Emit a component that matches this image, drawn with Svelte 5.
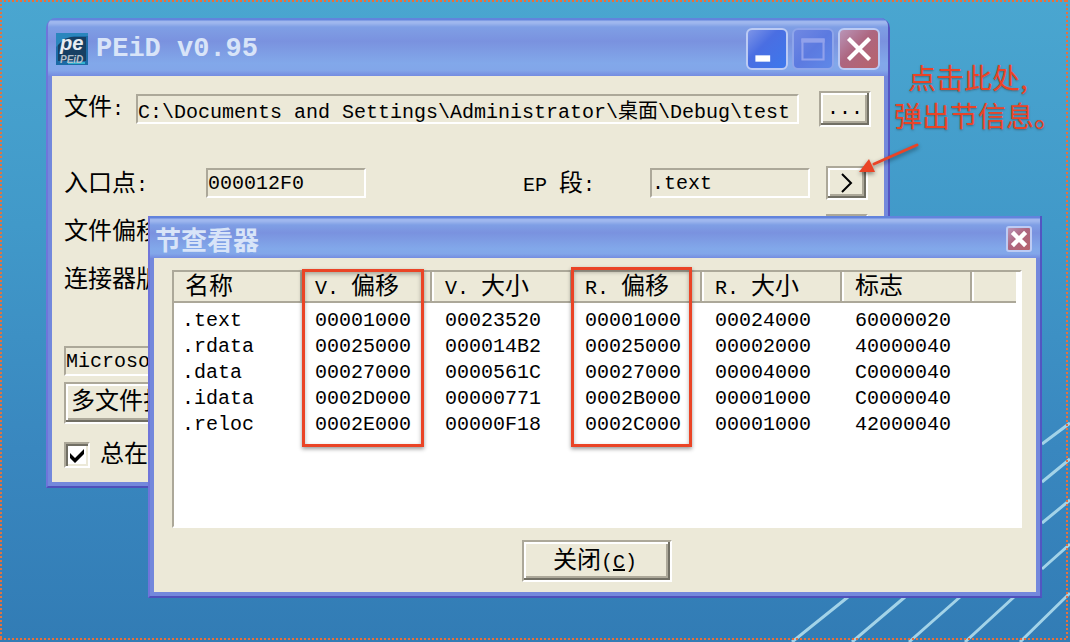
<script>
	//? variables
	const columns = [
		{ title: "名称", width: 128 },
		{ title: "V. 偏移", width: 130 },
		{ title: "V. 大小", width: 140 },
		{ title: "R. 偏移", width: 130 },
		{ title: "R. 大小", width: 140 },
		{ title: "标志", width: 130 },
	];

	const sections = [
		[".text", "00001000", "00023520", "00001000", "00024000", "60000020"],
		[".rdata", "00025000", "000014B2", "00025000", "00002000", "40000040"],
		[".data", "00027000", "0000561C", "00027000", "00004000", "C0000040"],
		[".idata", "0002D000", "00000771", "0002B000", "00001000", "C0000040"],
		[".reloc", "0002E000", "00000F18", "0002C000", "00001000", "42000040"],
	];

	let path = $state("C:\\Documents and Settings\\Administrator\\桌面\\Debug\\test");
	let entryPoint = $state("000012F0");
	let epSection = $state(".text");
	let compiler = $state("Microsoft");
	let onTop = $state(true);
	let showSections = $state(true);

	//? Logic

	// latin and chinese runs are set in different sizes, two latin cells to one hanzi
	function runs(text) {
		return text.match(/[\u4e00-\u9fff]+|[^\u4e00-\u9fff]+/g).map((part) => ({
			part,
			han: /[\u4e00-\u9fff]/.test(part),
		}));
	}
</script>

{#snippet mixed(text)}{#each runs(text) as run}<span class:han={run.han}>{run.part}</span>{/each}{/snippet}

<main class="desktop">
	<svg class="stripes" viewBox="0 0 280 222" aria-hidden="true">
		<path
			d="M2 222 58 177M62 222 115 177M119 222 170 177M175 222 224 177M230 222 280 173M252 149 280 124M252 103 280 80M252 62 280 39M252 24 280 3" />
	</svg>

	<section class="window app-window">
		<header class="titlebar">
			<svg class="logo" viewBox="0 0 32 32" aria-hidden="true">
				<rect width="32" height="32" fill="#1b6aa5" />
				<rect x="2" y="4" width="28" height="24" fill="#173f63" />
				<path d="M0 0h32v3H18L8 6 0 14z" fill="#2a86bd" />
				<path d="M12 29h17v2H12z" fill="#35b3cf" />
				<text x="4" y="17" font-size="20">pe</text>
				<text class="small" x="4" y="30" font-size="10">PEiD</text>
			</svg>
			<h1>PEiD v0.95</h1>
			<div class="caption-buttons">
				<button class="caption min" aria-label="最小化">
					<svg viewBox="0 0 36 36"><path d="M7 24h14v6H7z" fill="#fff" /></svg>
				</button>
				<button class="caption max" aria-label="最大化" disabled>
					<svg viewBox="0 0 36 36">
						<path d="M8 9h20v19H8z" fill="none" stroke="#91a1eb" stroke-width="2" />
						<path d="M7 8h22v4H7z" fill="#91a1eb" />
					</svg>
				</button>
				<button class="caption close" aria-label="关闭">
					<svg viewBox="0 0 36 36"><path d="M8 8 28 28M28 8 8 28" stroke="#fff" stroke-width="4" /></svg>
				</button>
			</div>
		</header>

		<div class="app-body">
			<div class="row file-row">
				<label for="path">{@render mixed("文件:")}</label>
				<input id="path" class="field grow" bind:value={path} />
				<button class="push browse">...</button>
			</div>
			<div class="row">
				<label class="wide" for="entry">{@render mixed("入口点:")}</label>
				<input id="entry" class="field" bind:value={entryPoint} />
				<label class="ep" for="ep">{@render mixed("EP 段:")}</label>
				<input id="ep" class="field" bind:value={epSection} />
				<button class="push arrow" aria-label="节查看器" onclick={() => (showSections = true)}>
					<svg viewBox="0 0 12 20" aria-hidden="true"><path d="M1 1 10 10 1 19" /></svg>
				</button>
			</div>
			<div class="row">
				<span>{@render mixed("文件偏移")}</span>
				<button class="push arrow last" aria-label="反汇编"></button>
			</div>
			<div class="row">
				<span>{@render mixed("连接器版")}</span>
			</div>
			<input class="field compiler" aria-label="编译器" bind:value={compiler} />
			<button class="push multi">{@render mixed("多文件扫")}</button>
			<label class="check">
				<input type="checkbox" bind:checked={onTop} />
				<span>{@render mixed("总在")}</span>
			</label>
		</div>
	</section>

	<aside class="note">
		<p>点击此处,</p>
		<p>弹出节信息。</p>
	</aside>

	{#if showSections}
		<section class="window dialog">
			<header class="titlebar">
				<h2>节查看器</h2>
				<button class="caption close" aria-label="关闭" onclick={() => (showSections = false)}>
					<svg viewBox="0 0 20 20"><path d="M4 4 16 16M16 4 4 16" stroke="#fff" stroke-width="4" /></svg>
				</button>
			</header>
			<div class="dialog-body">
				<div class="list">
					<table>
						<colgroup>
							{#each columns as column}
								<col style="width: {column.width}px" />
							{/each}
							<col />
						</colgroup>
						<thead>
							<tr>
								{#each columns as column}
									<th>{@render mixed(column.title)}</th>
								{/each}
								<th></th>
							</tr>
						</thead>
						<tbody>
							{#each sections as section}
								<tr>
									{#each section as value}
										<td>{value}</td>
									{/each}
									<td></td>
								</tr>
							{/each}
						</tbody>
					</table>
					<div class="mark virtual"></div>
					<div class="mark raw"></div>
				</div>
				<button class="push dismiss" onclick={() => (showSections = false)}>
					<span class="han">关闭</span>(<u>C</u>)
				</button>
			</div>
		</section>
	{/if}

	<svg class="pointer" viewBox="0 0 70 40" aria-hidden="true">
		<path d="M61 7 18 26" stroke="#ea4426" stroke-width="3" stroke-linecap="round" />
		<path d="M3 34 13 21 19 34z" fill="#ea4426" />
	</svg>
	<div class="frame"></div>
</main>

<style>
	:global(body) {
		margin: 0;
	}

	.desktop {
		position: relative;
		min-height: 100vh;
		overflow: hidden;
		background: linear-gradient(#4aa6d0, #4199c9 35%, #3987bf 70%, #327cb5);
		font: 20px/24px "Liberation Mono", "Noto Sans CJK SC", monospace;
		color: #000;
	}

	.desktop :is(button, input) {
		box-sizing: border-box;
		font: inherit;
		color: inherit;
	}

	.han {
		font-family: "Noto Sans CJK SC", sans-serif;
		font-size: 24px;
	}

	.stripes {
		position: absolute;
		right: 0;
		bottom: 0;
		width: 280px;
		fill: none;
		stroke: #a3d3e8;
		stroke-width: 3;
	}

	/* windows */
	.window {
		position: absolute;
		box-sizing: border-box;
		border: solid #6f75da;
		border-width: 0 2px 2px;
		border-right-color: #5355c2;
		border-bottom-color: #4f50bb;
		background: #7388dc;
	}

	.app-window {
		top: 18px;
		left: 46px;
		right: 180px;
		border-radius: 10px 10px 0 0;
	}

	.dialog {
		top: 216px;
		left: 148px;
		right: 28px;
	}

	.titlebar {
		display: flex;
		align-items: center;
		box-sizing: border-box;
		height: 58px;
		padding: 4px 8px 0;
		border-radius: 8px 8px 0 0;
		background: linear-gradient(#6283dc 2px, #9fb7ee 3px, #9fb7ee 5px, #7f9fe5 9px, #7a92df 40%, #82a8ea 78%, #82a6e9 90%, #748ce0);
	}

	.dialog .titlebar {
		height: 42px;
		padding: 4px 8px 0 5px;
		border-radius: 0;
	}

	h1,
	h2 {
		flex: 1;
		margin: 0;
		font-size: 27px;
		line-height: 32px;
		font-weight: 700;
		color: #d8e4f8;
	}

	h2 {
		font-family: "Noto Sans CJK SC", sans-serif;
		font-size: 26px;
	}

	.logo {
		width: 32px;
		height: 32px;
		margin-right: 8px;
	}

	.logo text {
		font-family: "Liberation Sans", sans-serif;
		font-weight: 700;
		font-style: italic;
		fill: #e8edf2;
	}

	.logo .small {
		fill: #b4bfca;
	}

	.caption-buttons {
		display: flex;
		gap: 4px;
	}

	.caption {
		width: 42px;
		height: 42px;
		padding: 0;
		border: 2px solid #bccbf4;
		border-radius: 6px;
		background: linear-gradient(135deg, #7d95e8, #4a6ee2 40%, #3d78ec);
	}

	.caption svg {
		display: block;
		width: 100%;
	}

	.caption.max {
		border-color: #8ea5ea;
		background: linear-gradient(135deg, #7088e2, #5c7ae0 50%, #5f88e8);
	}

	.caption.close {
		background: linear-gradient(135deg, #b995b8, #ad6680 45%, #b8636b);
	}

	.dialog .caption {
		width: 26px;
		height: 26px;
		border-radius: 3px;
	}

	/* controls */
	.field {
		width: 160px;
		height: 30px;
		padding: 0;
		border: 2px solid;
		border-color: #aca899 #fff #fff #aca899;
		border-radius: 0;
		background: #ece9d8;
		outline: none;
	}

	.push {
		padding: 0;
		border: 2px solid;
		border-color: #aca899 #fff #fff #aca899;
		border-radius: 0;
		background: #ece9d8;
		box-shadow:
			inset -2px -2px #716f64,
			inset 2px 2px #fff,
			inset -4px -4px #aca899;
	}

	/* main window */
	.app-body {
		display: flex;
		flex-direction: column;
		margin: 0 4px 4px;
		padding: 16px 13px 14px 12px;
		background: #ece9d8;
	}

	.row {
		display: flex;
		align-items: center;
		height: 34px;
		margin: 0 3px 12px 0;
		white-space: nowrap;
	}

	.row + .row {
		margin-bottom: 14px;
	}

	.file-row {
		margin: 0 0 40px;
	}

	.file-row label {
		width: 72px;
		padding-bottom: 4px;
	}

	.grow {
		flex: 1;
		min-width: 0;
	}

	.browse {
		width: 52px;
		height: 36px;
		margin-left: 20px;
	}

	.wide {
		width: 142px;
	}

	.ep {
		width: 127px;
		margin-left: auto;
	}

	.arrow {
		width: 42px;
		height: 34px;
		margin-left: 16px;
	}

	.last {
		margin-left: auto;
	}

	.arrow svg {
		display: block;
		width: 12px;
		margin: auto;
		fill: none;
		stroke: #000;
		stroke-width: 2;
	}

	.compiler {
		width: 100%;
		margin-top: 36px;
	}

	.multi {
		width: 160px;
		height: 42px;
		margin: 6px 0 18px;
		padding: 0 0 4px 5px;
		text-align: left;
	}

	.check {
		display: flex;
		align-items: center;
		height: 26px;
	}

	.check span {
		padding-bottom: 2px;
	}

	.check input {
		appearance: none;
		width: 26px;
		height: 26px;
		margin: 0 10px 0 0;
		border: 2px solid;
		border-color: #aca899 #fff #fff #aca899;
		background: #fff;
		box-shadow:
			inset 2px 2px #716f64,
			inset -2px -2px #ece9d8;
	}

	.check input:checked {
		background: #fff
			url("data:image/svg+xml,%3Csvg xmlns='http://www.w3.org/2000/svg' viewBox='0 0 22 22'%3E%3Cpath d='M4 9v5l5 5 9-9V5l-9 9z'/%3E%3C/svg%3E");
	}

	/* section viewer */
	.dialog-body {
		margin: 0 4px 4px;
		padding: 12px 14px 10px 18px;
		background: #ece9d8;
	}

	.list {
		position: relative;
		height: 254px;
		border: 2px solid;
		border-color: #aca899 #fff #fff #aca899;
		background: #fff;
	}

	table {
		width: calc(100% - 4px);
		table-layout: fixed;
		border-collapse: separate;
		border-spacing: 0;
		white-space: nowrap;
	}

	th {
		box-sizing: border-box;
		height: 30px;
		padding: 0 0 0 13px;
		border: solid #aca899;
		border-width: 0 2px 2px 0;
		background: #ece9d8;
		box-shadow: inset 2px 0 #fff;
		text-align: left;
		font-weight: 400;
	}

	th:first-child {
		padding-left: 11px;
		box-shadow: none;
	}

	th:last-child {
		border-right: 0;
	}

	tbody::before {
		content: "";
		display: table-row;
		height: 5px;
	}

	td {
		height: 26px;
		padding: 0 0 0 13px;
	}

	td:first-child {
		padding-left: 8px;
	}

	.mark {
		position: absolute;
		box-sizing: border-box;
		border: 3px solid #ea4426;
		box-shadow:
			0 2px 4px rgba(0, 0, 0, 0.4),
			inset 0 2px 4px rgba(0, 0, 0, 0.3);
	}

	.virtual {
		top: -3px;
		left: 128px;
		width: 122px;
		height: 178px;
	}

	.raw {
		top: -5px;
		left: 397px;
		width: 121px;
		height: 180px;
	}

	.dismiss {
		display: block;
		width: 150px;
		height: 42px;
		margin: 12px auto 0;
		padding: 0 4px 2px 0;
	}

	/* annotation */
	.note {
		position: absolute;
		top: 58px;
		right: 8px;
		width: 168px;
		font: 28px/38px "Noto Sans CJK SC", sans-serif;
		color: #ea4426;
		text-shadow: 0 1px 2px rgba(60, 60, 60, 0.5);
		white-space: nowrap;
	}

	.note p {
		margin: 0;
	}

	.note p:first-child {
		padding-left: 14px;
	}

	.pointer {
		position: absolute;
		top: 138px;
		right: 144px;
		width: 70px;
		overflow: visible;
		filter: drop-shadow(0 2px 2px rgba(0, 0, 0, 0.45));
	}

	.frame {
		position: absolute;
		inset: 0 2px 2px 0;
		pointer-events: none;
		--dots: #e8703c 0 2px, transparent 2px 4px;
		background:
			repeating-linear-gradient(90deg, var(--dots)) top / 100% 2px no-repeat,
			repeating-linear-gradient(90deg, var(--dots)) bottom / 100% 2px no-repeat,
			repeating-linear-gradient(var(--dots)) left / 2px 100% no-repeat,
			repeating-linear-gradient(var(--dots)) right / 2px 100% no-repeat;
	}
</style>
